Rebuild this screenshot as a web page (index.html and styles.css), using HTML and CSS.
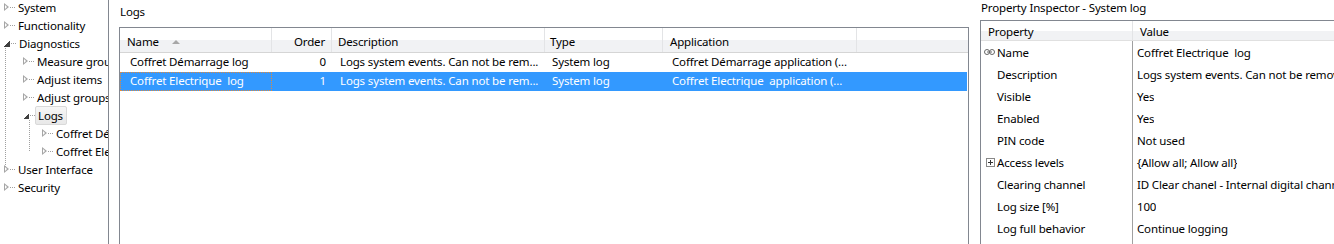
FILE: index.html
```html
<!DOCTYPE html>
<html lang="en">
<head>
    <meta charset="UTF-8">
    <title>Logs</title>
    <link rel="stylesheet" href="styles.css">
</head>
<body>
    <div class="tree">
        <div class="node lvl0"><span class="arrow"></span><span class="dots"></span><span class="label">System</span></div>
        <div class="node lvl0"><span class="arrow"></span><span class="dots"></span><span class="label">Functionality</span></div>
        <div class="node lvl0 open"><span class="arrow"></span><span class="dots"></span><span class="label">Diagnostics</span></div>
        <div class="branch b0">
            <div class="node lvl1"><span class="arrow"></span><span class="dots"></span><span class="label">Measure groups</span></div>
            <div class="node lvl1"><span class="arrow"></span><span class="dots"></span><span class="label">Adjust items</span></div>
            <div class="node lvl1"><span class="arrow"></span><span class="dots"></span><span class="label">Adjust groups</span></div>
            <div class="node lvl1 open"><span class="arrow"></span><span class="dots"></span><span class="label sel">Logs</span></div>
            <div class="branch b1">
                <div class="node lvl2"><span class="arrow"></span><span class="dots"></span><span class="label">Coffret Démarrage log</span></div>
                <div class="node lvl2"><span class="arrow"></span><span class="dots"></span><span class="label">Coffret Electrique log</span></div>
            </div>
        </div>
        <div class="node lvl0"><span class="arrow"></span><span class="dots"></span><span class="label">User Interface</span></div>
        <div class="node lvl0"><span class="arrow"></span><span class="dots"></span><span class="label">Security</span></div>
    </div>

    <div class="logs-panel">
        <div class="panel-title">Logs</div>
        <div class="grid">
            <div class="grid-head">
                <div class="cell c-name">Name <span class="sort"></span></div>
                <div class="cell c-order">Order</div>
                <div class="cell c-desc">Description</div>
                <div class="cell c-type">Type</div>
                <div class="cell c-app">Application</div>
                <div class="cell c-fill"></div>
            </div>
            <div class="grid-row">
                <div class="cell c-name">Coffret Démarrage log</div>
                <div class="cell c-order">0</div>
                <div class="cell c-desc">Logs system events. Can not be rem...</div>
                <div class="cell c-type">System log</div>
                <div class="cell c-app">Coffret Démarrage application (...</div>
            </div>
            <div class="grid-row selected">
                <div class="cell c-name focus">Coffret Electrique&nbsp; log</div>
                <div class="cell c-order">1</div>
                <div class="cell c-desc">Logs system events. Can not be rem...</div>
                <div class="cell c-type">System log</div>
                <div class="cell c-app">Coffret Electrique&nbsp; application (...</div>
            </div>
        </div>
    </div>

    <div class="props-panel">
        <div class="panel-title small">Property Inspector - System log</div>
        <div class="props">
            <div class="props-head">
                <div class="p-key">Property</div>
                <div class="p-val">Value</div>
            </div>
            <div class="prop">
                <div class="p-key">
                    <svg class="ico" width="11" height="6" viewBox="0 0 11 6"><rect x="0.5" y="0.5" width="5" height="5" rx="2.5" fill="none" stroke="#666"/><rect x="5.5" y="0.5" width="5" height="5" rx="2.5" fill="none" stroke="#666"/><line x1="3" y1="3" x2="8" y2="3" stroke="#666"/></svg>Name
                </div>
                <div class="p-val">Coffret Electrique&nbsp; log</div>
            </div>
            <div class="prop"><div class="p-key">Description</div><div class="p-val">Logs system events. Can not be removed.</div></div>
            <div class="prop"><div class="p-key">Visible</div><div class="p-val">Yes</div></div>
            <div class="prop"><div class="p-key">Enabled</div><div class="p-val">Yes</div></div>
            <div class="prop"><div class="p-key">PIN code</div><div class="p-val">Not used</div></div>
            <div class="prop">
                <div class="p-key">
                    <svg class="ico plus" width="9" height="9" viewBox="0 0 9 9"><rect x="0.5" y="0.5" width="8" height="8" fill="#fff" stroke="#888"/><line x1="2" y1="4.5" x2="7" y2="4.5" stroke="#333"/><line x1="4.5" y1="2" x2="4.5" y2="7" stroke="#333"/></svg>Access levels
                </div>
                <div class="p-val">{Allow all; Allow all}</div>
            </div>
            <div class="prop"><div class="p-key">Clearing channel</div><div class="p-val">ID Clear chanel - Internal digital channel</div></div>
            <div class="prop"><div class="p-key">Log size [%]</div><div class="p-val">100</div></div>
            <div class="prop"><div class="p-key">Log full behavior</div><div class="p-val">Continue logging</div></div>
        </div>
    </div>
</body>
</html>
```

FILE: styles.css
```css
* {
    margin: 0;
    padding: 0;
    box-sizing: border-box;
}

body {
    font-family: 'Noto Sans', 'Open Sans', sans-serif;
    font-size: 11.5px;
    letter-spacing: -0.15px;
    color: #000;
    background: #fff;
    display: flex;
    height: 244px;
    overflow: hidden;
}

/* navigation tree */
.tree {
    width: 109px;
    flex: none;
    margin-top: -2px;
    height: 246px;
    border-right: 1px solid #828790;
    overflow: hidden;
    white-space: nowrap;
}

.node {
    height: 18px;
    display: flex;
    align-items: center;
    position: relative;
}

.lvl0 { padding-left: 1px; }
.lvl1 { padding-left: 20px; }
.lvl2 { padding-left: 39px; }

.arrow {
    flex: none;
    width: 0;
    height: 0;
    border-top: 4px solid transparent;
    border-bottom: 4px solid transparent;
    border-left: 5px solid #a6a6a6;
    margin-left: 3px;
    position: relative;
}

.arrow::after {
    content: '';
    position: absolute;
    left: -4px;
    top: -2px;
    border-top: 2px solid transparent;
    border-bottom: 2px solid transparent;
    border-left: 2.5px solid #fff;
}

.open > .arrow {
    border: none;
    width: 6px;
    height: 6px;
    background: linear-gradient(135deg, transparent 50%, #404040 50%);
    margin-left: 3px;
    margin-top: 1px;
}

.open > .arrow::after { display: none; }

.dots {
    flex: none;
    width: 5px;
    margin: 1px 1px 0 1px;
    border-top: 1px dotted #a0a0a0;
}

.label {
    padding: 0 1px 0 2px;
    line-height: 17px;
}

.label.sel {
    background: linear-gradient(#f6f6f6, #e8e8e8);
    border: 1px solid #d9d9d9;
    border-radius: 2px;
    padding: 0 3px 0 2px;
    margin-left: -1px;
}

.branch {
    position: relative;
}

.b0::before {
    content: '';
    position: absolute;
    left: 5px;
    top: -4px;
    bottom: -9px;
    border-left: 1px dotted #a0a0a0;
}

.b1::before {
    content: '';
    position: absolute;
    left: 29px;
    top: -4px;
    bottom: 9px;
    border-left: 1px dotted #a0a0a0;
}

/* logs grid */
.logs-panel {
    width: 850px;
    margin-left: 10px;
    flex: none;
    display: flex;
    flex-direction: column;
}

.panel-title {
    height: 27px;
    line-height: 24px;
    padding-left: 1px;
}

.panel-title.small {
    height: 20px;
    line-height: 16px;
}

.grid {
    flex: 1;
    border: 1px solid #828790;
    border-bottom: none;
}

.grid-head,
.grid-row {
    display: flex;
    white-space: nowrap;
}

.grid-head {
    height: 25px;
    background: linear-gradient(#fff 0%, #fff 50%, #f1f2f4 51%, #f1f2f4 100%);
    border-bottom: 1px solid #d5d5d5;
}

.grid-head .cell {
    padding-top: 3px;
    line-height: 21px;
    border-right: 1px solid #e3e4e6;
    padding-left: 7px;
}

.grid-row {
    height: 19px;
}

.grid-row .cell {
    line-height: 18px;
    padding-left: 10px;
}

.cell {
    flex: none;
    overflow: hidden;
}

.c-name { width: 152px; }
.c-order { width: 60px; }
.c-desc { width: 213px; }
.c-type { width: 118px; }
.c-app { width: 194px; }
.c-fill { flex: 1; border-right: none !important; }

.grid-head .c-order,
.grid-row .c-order {
    text-align: right;
    padding-left: 0;
    padding-right: 6px;
}

.grid-row .c-desc { padding-left: 8px; }
.grid-row .c-type { padding-left: 7px; }
.grid-row .c-app { padding-left: 9px; }

.grid-head .c-desc { padding-left: 6px; }
.grid-head .c-type { padding-left: 5px; }

.sort {
    display: inline-block;
    margin-left: 10px;
    border-left: 4px solid transparent;
    border-right: 4px solid transparent;
    border-bottom: 4px solid #a7a7a7;
    vertical-align: 2px;
}

.grid-row.selected {
    background: #3399ff;
    color: #fff;
    width: 847px;
}

.cell.focus {
    border: 1px dotted #e08a3c;
    line-height: 16px;
    padding-left: 9px;
}

/* property inspector */
.props-panel {
    flex: 1;
    margin-left: 11px;
    display: flex;
    flex-direction: column;
    min-width: 0;
}

.props {
    flex: 1;
    border-left: 1px solid #828790;
    border-top: 1px solid #828790;
    position: relative;
    white-space: nowrap;
    overflow: hidden;
}

.props::before {
    content: '';
    position: absolute;
    left: 151px;
    top: 20px;
    bottom: 0;
    border-left: 1px solid #a0a0a0;
}

.props-head {
    display: flex;
    height: 20px;
    background: linear-gradient(#fff 0%, #fff 50%, #f1f2f4 51%, #f1f2f4 100%);
    border-bottom: 1px solid #e0e0e0;
}

.props-head .p-key {
    flex: none;
    width: 152px;
    padding: 1px 0 0 7px;
    line-height: 19px;
    border-right: 1px solid #e3e4e6;
}

.props-head .p-val {
    padding: 1px 0 0 7px;
    line-height: 19px;
}

.prop {
    display: flex;
    height: 22px;
    align-items: center;
}

.prop .p-key {
    flex: none;
    width: 152px;
    padding-left: 16px;
    display: flex;
    align-items: center;
    position: relative;
}

.prop .p-val {
    padding-left: 4px;
    overflow: hidden;
}

.ico {
    position: absolute;
    left: 3px;
}

.ico.plus {
    left: 5px;
}
```
